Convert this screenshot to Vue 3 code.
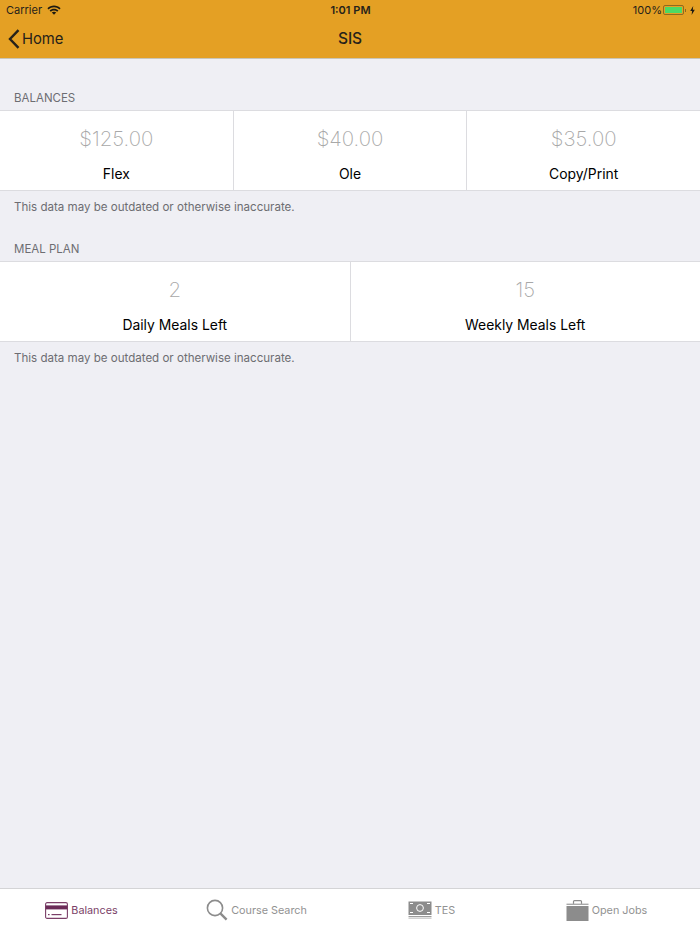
<template>
  <div class="page">
    <header class="navbar">
      <div class="status">
        <div class="status-left">
          <span>Carrier</span>
          <svg class="wifi" width="14" height="10" viewBox="0 0 14 10">
            <path d="M0.4 3.3 C4 -0.5 10 -0.5 13.6 3.3 L12.4 4.6 C9.4 1.6 4.6 1.6 1.6 4.6 Z" fill="#1d1a12" />
            <path d="M2.6 5.5 C5 3.1 9 3.1 11.4 5.5 L10.2 6.7 C8.4 5 5.6 5 3.8 6.7 Z" fill="#1d1a12" />
            <path d="M4.8 7.6 C6 6.5 8 6.5 9.2 7.6 L7 9.8 Z" fill="#1d1a12" />
          </svg>
        </div>
        <span class="clock">1:01 PM</span>
        <div class="status-right">
          <span>100%</span>
          <span class="battery"><span class="battery-fill"></span></span>
          <span class="battery-nub"></span>
          <svg width="5" height="9" viewBox="0 0 5 9">
            <path d="M3.2 0 L0.2 5 H2.1 L1.6 9 L4.8 3.7 H2.8 Z" fill="#1d1a12" />
          </svg>
        </div>
      </div>
      <div class="nav-row">
        <div class="back">
          <svg width="12" height="20" viewBox="0 0 12 20">
            <path d="M10.5 1.2 L2 10 L10.5 18.8" fill="none" stroke="#26221a" stroke-width="2.4" />
          </svg>
          <span>Home</span>
        </div>
        <span class="title">SIS</span>
      </div>
    </header>

    <main class="content">
      <section v-for="section in sections" :key="section.title" class="section">
        <h2 class="section-title">{{ section.title }}</h2>
        <div class="cells">
          <div v-for="item in section.items" :key="item.label" class="cell">
            <div class="value">{{ item.value }}</div>
            <div class="label">{{ item.label }}</div>
          </div>
        </div>
        <p class="note">This data may be outdated or otherwise inaccurate.</p>
      </section>
    </main>

    <nav class="tabbar">
      <div class="tab active">
        <svg width="23" height="17" viewBox="0 0 23 17">
          <rect x="0.6" y="0.6" width="21.8" height="15.8" rx="1.5" fill="none" stroke="#7b3f68" stroke-width="1.1" />
          <rect x="0.6" y="3.4" width="21.8" height="4" fill="#6b2c58" />
          <rect x="3" y="12" width="1.6" height="1.2" fill="#7b3f68" />
          <rect x="6.5" y="12" width="10" height="1.2" fill="#7b3f68" />
        </svg>
        <span>Balances</span>
      </div>
      <div class="tab">
        <svg width="22" height="22" viewBox="0 0 22 22">
          <circle cx="9" cy="9" r="7.6" fill="none" stroke="#8c8c8c" stroke-width="1.6" />
          <path d="M14.6 14.6 L20.6 20.6" stroke="#8c8c8c" stroke-width="2.4" />
        </svg>
        <span>Course Search</span>
      </div>
      <div class="tab">
        <svg width="24" height="18" viewBox="0 0 24 18">
          <rect x="0.5" y="0.5" width="23" height="13.5" fill="#8c8c8c" />
          <circle cx="12" cy="7" r="3.4" fill="none" stroke="#fff" stroke-width="1" />
          <rect x="2" y="2" width="3" height="1" fill="#fff" />
          <rect x="19" y="2" width="3" height="1" fill="#fff" />
          <rect x="2" y="11" width="3" height="1" fill="#fff" />
          <rect x="19" y="11" width="3" height="1" fill="#fff" />
          <rect x="0.5" y="15" width="23" height="1" fill="#9c9c9c" />
          <rect x="0.5" y="16.6" width="23" height="1" fill="#b4b4b4" />
        </svg>
        <span>TES</span>
      </div>
      <div class="tab">
        <svg width="23" height="21" viewBox="0 0 23 21">
          <path d="M7.5 4 V1.6 Q7.5 0.7 8.5 0.7 H14.5 Q15.5 0.7 15.5 1.6 V4" fill="none" stroke="#8c8c8c" stroke-width="1.2" />
          <rect x="0.5" y="3.6" width="22" height="1.4" fill="#a8a8a8" />
          <rect x="0.5" y="6" width="22" height="15" fill="#8c8c8c" />
        </svg>
        <span>Open Jobs</span>
      </div>
    </nav>
  </div>
</template>

<script setup>
const sections = [
  {
    title: 'BALANCES',
    items: [
      { label: 'Flex', value: '$125.00' },
      { label: 'Ole', value: '$40.00' },
      { label: 'Copy/Print', value: '$35.00' }
    ]
  },
  {
    title: 'MEAL PLAN',
    items: [
      { label: 'Daily Meals Left', value: '2' },
      { label: 'Weekly Meals Left', value: '15' }
    ]
  }
]
</script>

<style>
html, body {
  margin: 0;
  background: #efeff4;
}
</style>

<style scoped>
.page {
  display: flex;
  flex-direction: column;
  height: 933px;
  background: #efeff4;
  font-family: Inter, "Liberation Sans", sans-serif;
  color: #000;
}

.navbar {
  height: 58px;
  background: #e4a024;
  border-bottom: 1px solid #c9c5b8;
  color: #26221a;
  flex-shrink: 0;
}

.status {
  position: relative;
  display: flex;
  justify-content: space-between;
  align-items: center;
  height: 20px;
  padding: 0 5px 0 6px;
  font-size: 11px;
}

.status-left,
.status-right {
  display: flex;
  align-items: center;
}

.wifi {
  margin-left: 5px;
}

.clock {
  position: absolute;
  left: 1px;
  right: 0;
  text-align: center;
  font-weight: 600;
  font-size: 11px;
}

.battery {
  display: block;
  box-sizing: border-box;
  width: 21px;
  height: 10px;
  margin-left: 1px;
  padding: 1px;
  border: 1px solid #8f6a20;
  border-radius: 2px;
}

.battery-fill {
  display: block;
  height: 100%;
  background: #4cd964;
}

.battery-nub {
  width: 1px;
  height: 3px;
  margin: 0 4px 0 1px;
  background: #8f6a20;
}

.nav-row {
  position: relative;
  display: flex;
  align-items: center;
  justify-content: center;
  height: 37px;
}

.back {
  position: absolute;
  left: 8px;
  top: 9px;
  display: flex;
  align-items: center;
  gap: 2px;
  font-size: 14.8px;
}

.title {
  font-size: 15.5px;
  font-weight: 500;
}

.content {
  flex: 1;
  padding-top: 27px;
}

.section-title {
  margin: 0;
  padding: 0 14px;
  height: 24px;
  line-height: 25px;
  font-size: 11.5px;
  font-weight: 400;
  color: #6d6d72;
}

.cells {
  display: flex;
  height: 79px;
  background: #fff;
  border-top: 1px solid #dcdce0;
  border-bottom: 1px solid #dcdce0;
}

.cell {
  flex: 1;
  text-align: center;
  border-left: 1px solid #dcdce0;
}

.cell:first-child {
  border-left: 0;
}

.value {
  margin-top: 15px;
  height: 26px;
  line-height: 26px;
  font-size: 20.4px;
  font-weight: 200;
  color: #a8a8a8;
}

.label {
  margin-top: 12px;
  line-height: 20px;
  font-size: 13.9px;
}

.note {
  margin: 0;
  padding: 8px 14px 0;
  height: 38px;
  line-height: 16px;
  font-size: 11.55px;
  color: #6d6d72;
}

.tabbar {
  display: flex;
  height: 44px;
  flex-shrink: 0;
  background: #fff;
  border-top: 1px solid #d4d4d6;
}

.tab {
  flex: 1;
  display: flex;
  align-items: center;
  justify-content: center;
  gap: 3px;
  padding: 0 12px 2px 0;
  font-size: 10.8px;
  color: #929292;
}

.tab.active {
  color: #7b3f68;
}
</style>
